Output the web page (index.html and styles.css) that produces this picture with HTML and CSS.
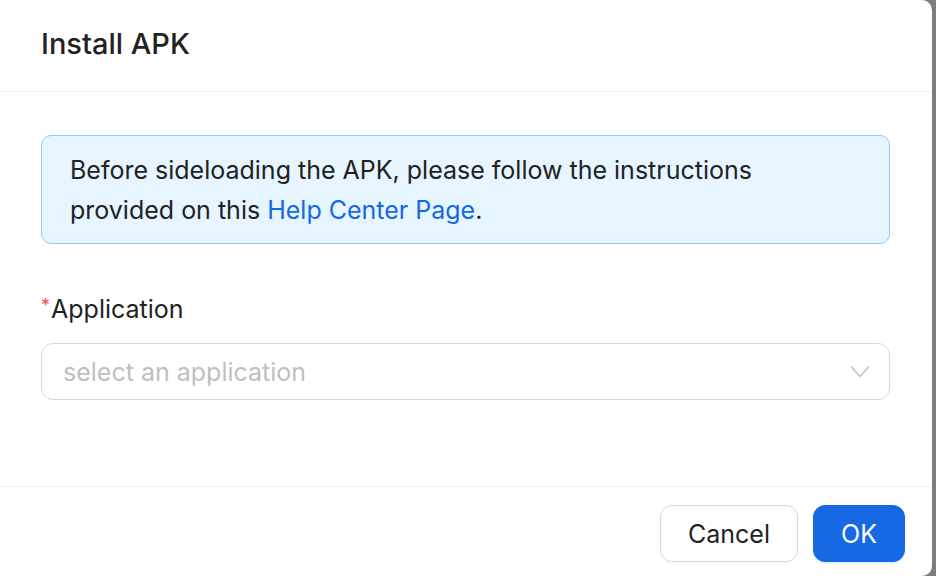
FILE: index.html
```html
<!DOCTYPE html>
<html>
<head>
<meta charset="utf-8">
<link rel="stylesheet" href="styles.css">
</head>
<body>
<div class="modal">
  <div class="modal-header">
    <h1 class="title">Install APK</h1>
  </div>
  <div class="modal-body">
    <div class="alert">
      Before sideloading the APK, please follow the instructions provided on this <a class="link" href="#">Help Center Page</a>.
    </div>
    <div class="field">
      <label class="label"><span class="req">*</span>Application</label>
      <div class="select">
        <span class="placeholder">select an application</span>
        <svg class="chevron" width="20" height="16" viewBox="0 0 20 16"><path d="M1 2.5 L10 12.5 L19 2.5" fill="none" stroke="#bfbfbf" stroke-width="1.5"/></svg>
      </div>
    </div>
  </div>
  <div class="modal-footer">
    <button class="btn btn-default">Cancel</button>
    <button class="btn btn-primary">OK</button>
  </div>
</div>
</body>
</html>
```

FILE: styles.css
```css
html, body {
  margin: 0;
  padding: 0;
}
body {
  background: #7d7d7d;
  font-family: Inter, "Noto Sans", sans-serif;
  color: #222;
  width: 936px;
  height: 576px;
  overflow: hidden;
}
.modal {
  width: 932px;
  height: 576px;
  background: #fff;
  border-radius: 0 10px 10px 0;
  display: flex;
  flex-direction: column;
  box-sizing: border-box;
}
.modal-header {
  height: 92px;
  box-sizing: border-box;
  border-bottom: 1px solid #efefef;
  display: flex;
  align-items: center;
  padding: 0 41px 4px;
}
.title {
  margin: 0;
  font-size: 29px;
  font-weight: 500;
  color: #222;
}
.modal-body {
  flex: 1;
  padding: 43px 42px 0 41px;
  display: flex;
  flex-direction: column;
}
.alert {
  background: #e6f5ff;
  border: 1px solid #93ccf9;
  border-radius: 10px;
  padding: 14px 60px 14px 28px;
  font-size: 25px;
  line-height: 40px;
  color: #222;
  height: 109px;
  box-sizing: border-box;
}
.link {
  color: #1668e3;
  text-decoration: none;
}
.field {
  margin-top: 42px;
  display: flex;
  flex-direction: column;
}
.label {
  font-size: 25px;
  line-height: 40px;
  color: #222;
  margin-bottom: 14px;
}
.req {
  color: #ff4d4f;
  font-size: 18px;
  vertical-align: 6px;
  margin-right: 1px;
}
.select {
  height: 57px;
  box-sizing: border-box;
  border: 1px solid #d9d9d9;
  border-radius: 12px;
  display: flex;
  align-items: center;
  justify-content: space-between;
  padding: 0 19px 0 21px;
}
.placeholder {
  color: #bfbfbf;
  font-size: 25px;
}
.chevron {
  margin-top: 1px;
}
.modal-footer {
  height: 90px;
  box-sizing: border-box;
  border-top: 1px solid #efefef;
  display: flex;
  justify-content: flex-end;
  align-items: flex-start;
  padding: 18px 27px 0 0;
  gap: 15px;
}
.btn {
  height: 57px;
  border-radius: 12px;
  font-family: Inter, "Noto Sans", sans-serif;
  font-size: 25px;
  padding: 0 16px;
  cursor: pointer;
}
.btn-default {
  background: #fff;
  border: 1px solid #d9d9d9;
  color: #222;
  width: 138px;
  box-shadow: 0 2px 0 rgba(0,0,0,0.02);
}
.btn-primary {
  background: #1668e3;
  border: 1px solid #1668e3;
  color: #fff;
  width: 92px;
  box-shadow: 0 2px 0 rgba(5,145,255,0.1);
}
```
